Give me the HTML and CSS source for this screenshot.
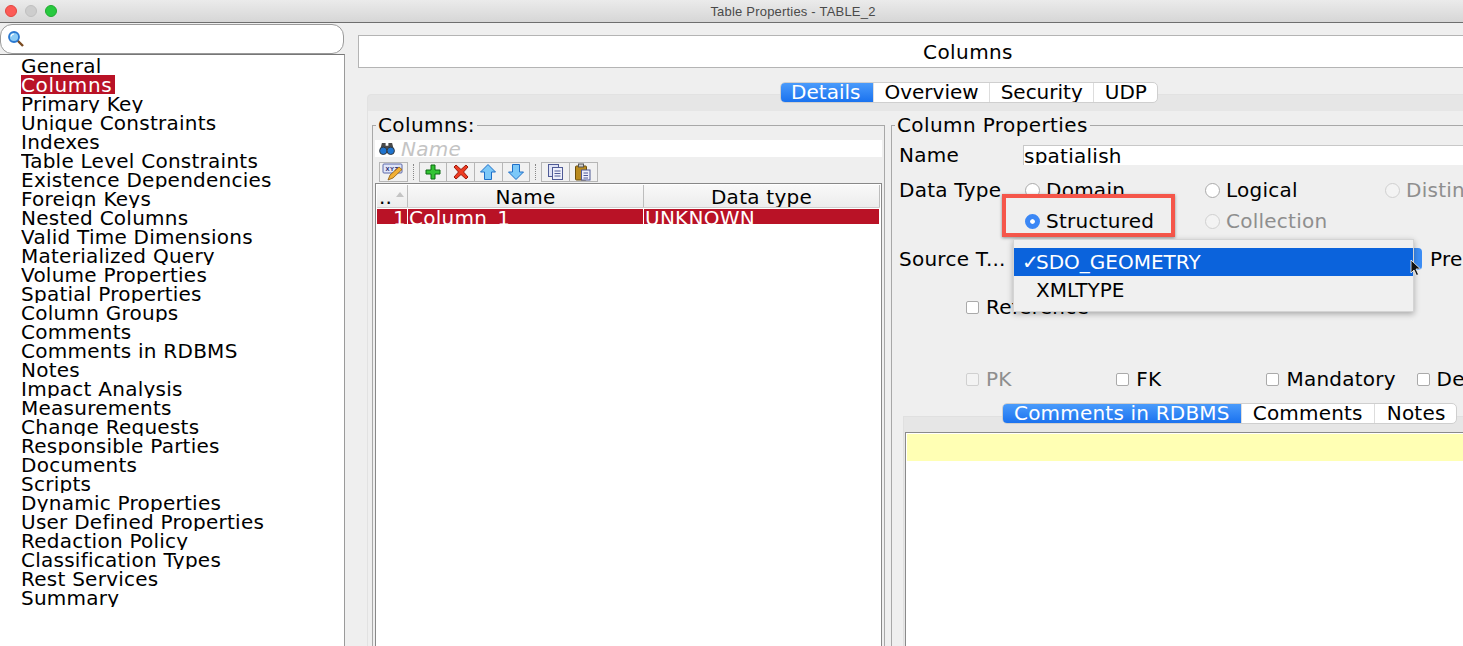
FILE: index.html
```html
<!DOCTYPE html>
<html lang="en">
<head>
<meta charset="utf-8">
<title>Table Properties - TABLE_2</title>
<link rel="stylesheet" href="styles.css">
</head>
<body>
<div class="window">
  <header class="titlebar">
    <span class="light red"></span><span class="light grey"></span><span class="light green"></span>
    <span class="wintitle">Table Properties - TABLE_2</span>
  </header>
  <div class="main">
    <aside class="side">
      <div class="search">
        <svg class="search-ic" width="18" height="18" viewBox="0 0 18 18"><line x1="10.5" y1="10.5" x2="16" y2="16" stroke="#7a4a20" stroke-width="2.4"/><circle cx="7" cy="7" r="5" fill="#8ccbf5" stroke="#2a78d0" stroke-width="1.8"/><path d="M4 6.5a3 3 0 0 1 3-2.500" fill="none" stroke="#fff" stroke-width="1.200"/></svg>
      </div>
      <ul class="nav">
        <li><span>General</span></li>
        <li><span class="sel">Columns</span></li>
        <li><span>Primary Key</span></li>
        <li><span>Unique Constraints</span></li>
        <li><span>Indexes</span></li>
        <li><span>Table Level Constraints</span></li>
        <li><span>Existence Dependencies</span></li>
        <li><span>Foreign Keys</span></li>
        <li><span>Nested Columns</span></li>
        <li><span>Valid Time Dimensions</span></li>
        <li><span>Materialized Query</span></li>
        <li><span>Volume Properties</span></li>
        <li><span>Spatial Properties</span></li>
        <li><span>Column Groups</span></li>
        <li><span>Comments</span></li>
        <li><span>Comments in RDBMS</span></li>
        <li><span>Notes</span></li>
        <li><span>Impact Analysis</span></li>
        <li><span>Measurements</span></li>
        <li><span>Change Requests</span></li>
        <li><span>Responsible Parties</span></li>
        <li><span>Documents</span></li>
        <li><span>Scripts</span></li>
        <li><span>Dynamic Properties</span></li>
        <li><span>User Defined Properties</span></li>
        <li><span>Redaction Policy</span></li>
        <li><span>Classification Types</span></li>
        <li><span>Rest Services</span></li>
        <li><span>Summary</span></li>
      </ul>
    </aside>
    <section class="content">
      <div class="pagehead">Columns</div>
      <div class="tabs maintabs">
        <span class="tab on">Details</span><span class="tab">Overview</span><span class="tab">Security</span><span class="tab">UDP</span>
      </div>
      <div class="tabpanel">
        <div class="panels">
          <fieldset class="group colgroup">
            <legend>Columns:</legend>
            <div class="filter">
              <svg width="16" height="13" viewBox="0 0 17 14"><path d="M3 1h4v3h3V1h4l2 8H9V7H8v2H1z" fill="#4a4a4a"/><circle cx="4.500" cy="9.500" r="4" fill="#1f74cf" stroke="#333"/><circle cx="12.500" cy="9.500" r="4" fill="#1f74cf" stroke="#333"/></svg>
              <span>Name</span>
            </div>
            <div class="toolbar">
              <span class="tb"><svg width="22" height="18" viewBox="0 0 22 18"><rect x="1" y="1" width="19" height="9" rx="1" fill="#dfe6fa" stroke="#5d68a8"/><text x="3.500" y="8" class="xy">XYZ</text><path d="M6 17l2-5 9-8 3 2.500-9 8.500z" fill="#f2b035" stroke="#8a5a10" stroke-width=".8"/></svg></span>
              <span class="sep"></span>
              <span class="tb"><svg width="18" height="18" viewBox="0 0 18 18"><path d="M7 2h4v5h5v4h-5v5H7v-5H2V7h5z" fill="#33c433" stroke="#0d6a12"/></svg></span><span class="tb"><svg width="18" height="18" viewBox="0 0 18 18"><path d="M2 4l2-2 5 4.500L14 2l2 2-4.500 5 4.500 5-2 2-5-4.500L4 16l-2-2 4.500-5z" fill="#ee3c22" stroke="#9c1a0c"/></svg></span><span class="tb"><svg width="18" height="18" viewBox="0 0 18 18"><path d="M9 1.500L16.500 9H12.500v7.500h-7V9H1.500z" fill="#7cc8f8" stroke="#1e6fc8"/></svg></span><span class="tb"><svg width="18" height="18" viewBox="0 0 18 18"><path d="M9 16.500L16.500 9H12.500V1.500h-7V9H1.500z" fill="#7cc8f8" stroke="#1e6fc8"/></svg></span>
              <span class="sep"></span>
              <span class="tb"><svg width="18" height="18" viewBox="0 0 18 18"><rect x="1.500" y="1.500" width="10" height="12" fill="#dfe3f5" stroke="#4f5a96"/><rect x="5.500" y="4.500" width="10" height="12" fill="#eef0fb" stroke="#4f5a96"/><path d="M7.500 8h6M7.500 10.500h6M7.500 13h6" stroke="#4f5a96"/></svg></span><span class="tb"><svg width="18" height="18" viewBox="0 0 18 18"><rect x="1.500" y="3" width="11" height="14" rx="1" fill="#b98a1e" stroke="#6b4e0d"/><rect x="4.500" y="1" width="5" height="3" fill="#d0d0d0" stroke="#555"/><rect x="7.500" y="7" width="8.500" height="10" fill="#eef0fb" stroke="#4f5a96"/><path d="M9.500 10h4.500M9.500 12.500h4.500M9.500 15h4.500" stroke="#4f5a96"/></svg></span>
            </div>
            <div class="table">
              <div class="thead">
                <div class="th th-n">..<i class="sort"></i></div>
                <div class="th">Name</div>
                <div class="th">Data type</div>
              </div>
              <div class="trow">
                <div class="td td-n">1</div>
                <div class="td">Column_1</div>
                <div class="td">UNKNOWN</div>
              </div>
            </div>
          </fieldset>
          <fieldset class="group propgroup">
            <legend>Column Properties</legend>
            <div class="row namerow">
              <label class="lbl">Name</label>
              <div class="input"><span>spatialish</span></div>
            </div>
            <div class="row typerow">
              <label class="lbl">Data Type</label>
              <div class="opt w180"><i class="radio"></i><span class="clip">Domain</span></div>
              <div class="opt w180"><i class="radio"></i><span>Logical</span></div>
              <div class="opt off"><i class="radio"></i><span>Distinct</span></div>
            </div>
            <div class="row structrow">
              <span class="lbl"></span>
              <div class="opt w180"><i class="radio on"></i><span>Structured</span></div>
              <div class="opt off"><i class="radio"></i><span>Collection</span></div>
            </div>
            <div class="row sourcerow">
              <label class="lbl">Source T...</label>
              <div class="combo"></div>
              <span class="after">Pre</span>
            </div>
            <div class="row refrow">
              <div class="opt chk"><i class="check"></i><span class="clip">Reference</span></div>
            </div>
            <div class="row flagrow">
              <div class="opt chk w150 off"><i class="check"></i><span>PK</span></div>
              <div class="opt chk w150"><i class="check"></i><span>FK</span></div>
              <div class="opt chk w150"><i class="check"></i><span>Mandatory</span></div>
              <div class="opt chk"><i class="check"></i><span>Deprecated</span></div>
            </div>
            <div class="tabs subtabs">
              <span class="tab on">Comments in RDBMS</span><span class="tab">Comments</span><span class="tab">Notes</span>
            </div>
            <div class="subpanel">
              <div class="editor"><div class="curline"></div></div>
            </div>
            <div class="highlight"></div>
            <div class="popup">
              <div class="item active"><span class="tick">✓</span>SDO_GEOMETRY</div>
              <div class="item"><span class="tick"></span>XMLTYPE</div>
            </div>
            <svg class="pointer" width="12" height="18" viewBox="0 0 12 18"><path d="M1 1v13l3-3 2.500 5.500 2-1L6 10h4.500z" fill="#111" stroke="#fff" stroke-width=".8"/></svg>
          </fieldset>
        </div>
      </div>
    </section>
  </div>
</div>
</body>
</html>
```
FILE: styles.css
```css
* { box-sizing: border-box; }
html, body { margin: 0; height: 100%; overflow: hidden; }
body { font-family: "DejaVu Sans", sans-serif; font-size: 20px; color: #000; background: #efefef; letter-spacing: .25px; }
.window { height: 646px; display: flex; flex-direction: column; overflow: hidden; }

.titlebar { height: 23px; flex: none; display: flex; align-items: center; padding-left: 5px; gap: 8px; position: relative;
  background: linear-gradient(#ebebeb, #d6d6d6); border-bottom: 1px solid #6e6e6e; }
.light { width: 12px; height: 12px; border-radius: 50%; }
.light.red { background: #fc5b57; border: 1px solid #e2463f; }
.light.grey { background: #cdcdcd; border: 1px solid #c0c0c0; }
.light.green { background: #28c93f; border: 1px solid #1faa2f; }
.wintitle { position: absolute; left: 123px; right: 0; text-align: center; font-family: "Liberation Sans", sans-serif; font-size: 13px; letter-spacing: .2px; color: #4a4a4a; }

.main { flex: 1; display: flex; min-height: 0; }
.side { width: 345px; flex: none; display: flex; flex-direction: column; }
.search { height: 30px; margin-top: 1px; width: 344px; background: #fff; border: 1px solid #9a9a9a; border-radius: 12px; padding: 5px 0 0 6px; flex: none; }
.search-ic { display: block; }
.nav { list-style: none; margin: 0; padding: 1px 0 0 21px; flex: 1; background: #fff; border-top: 1px solid #777; border-right: 1px solid #9a9a9a; }
.nav li { height: 19px; line-height: 21px; overflow: hidden; white-space: nowrap; }
.nav span { display: inline-block; height: 19px; padding-right: 2px; vertical-align: top; }
.nav .sel { background: #b91226; color: #fff; letter-spacing: .6px; padding-right: 3px; }

.content { width: 1222px; flex: none; margin-left: 13px; padding-top: 12px; }
.pagehead { height: 33px; width: 1220px; background: #fff; border: 1px solid #b4b4b4; text-align: center; line-height: 32px; letter-spacing: .4px; }
.tabs { display: flex; width: max-content; background: #fff; border: 1px solid #cfcfcf; border-radius: 5px; overflow: hidden; position: relative; z-index: 1; }
.tab { height: 19px; line-height: 19px; padding: 0 10.500px; border-left: 1px solid #ddd; white-space: nowrap; }
.tab:first-child { border-left: 0; }
.tab.on { color: #fff; background: linear-gradient(#4a9bfb, #1a72ef); }
.maintabs { margin: 14px auto -9px; letter-spacing: 0; }
.maintabs .on { padding-right: 12.500px; }
.tabpanel { margin-left: 9px; height: 600px; background: #e6e6e6; padding-top: 16px; border: 1px solid #e2e2e2; border-radius: 4px 4px 0 0; }
.panels { background: #efefef; height: 100%; display: flex; gap: 6px; padding: 0 0 0 4px; }

.group { margin: 0; padding: 0; border: 1px solid #a8a8a8; min-width: 0; position: relative; }
.group legend { padding: 0 2px; line-height: 24px; height: 24px; letter-spacing: .4px; }
.colgroup { width: 513px; flex: none; margin-top: 2px; padding: 0 2px; }
.colgroup legend { margin-left: 1px; }
.filter { height: 17px; background: #fff; display: flex; align-items: center; gap: 6px; padding-left: 4px; margin-top: 3px; color: #c4c4c4; font-style: italic; overflow: hidden; }
.toolbar { display: flex; align-items: center; height: 20px; margin-top: 5px; padding-left: 4px; }
.tb { width: 28.700px; height: 20px; flex: none; background: #f1f1f1; border: 1px solid #b6b6b6; display: flex; align-items: center; justify-content: center; margin-right: -1px; }
.sep { width: 1px; height: 16px; margin: 0 5px 0 6px; border-left: 1px dotted #888; flex: none; }
.xy { font-size: 6px; font-weight: 700; fill: #20206a; font-family: "Liberation Sans", sans-serif; letter-spacing: .5px; }
.table { margin-top: 1px; height: 480px; background: #fff; border: 1px solid #888; padding: 1px; }
.thead { display: grid; grid-template-columns: 31px 236px 236px; height: 23px; background: linear-gradient(#f9f9f9, #ececec); border-bottom: 1px solid #cfcfcf; }
.th { text-align: center; line-height: 24px; border-right: 1px solid #bdbdbd; position: relative; overflow: hidden; }
.th-n { text-align: left; padding-left: 2px; }
.sort { position: absolute; right: 3px; top: 7px; border: 4px solid transparent; border-bottom: 5px solid #c4c4c4; border-top: 0; }
.trow { display: grid; grid-template-columns: 31px 236px 236px; height: 15px; margin-top: 1px; background: #b91226; color: #fff; line-height: 18px; overflow: hidden; }
.td { border-right: 1px solid #fff; overflow: hidden; white-space: nowrap; padding-left: 1px; }
.td-n { text-align: right; padding-right: 1px; }

.propgroup { width: 700px; flex: none; margin-top: 2px; padding: 0 0 0 7px; }
.propgroup legend { margin-left: -4px; }
.row { display: flex; align-items: center; white-space: nowrap; }
.lbl { width: 126px; flex: none; }
.namerow { height: 22px; margin-top: 7px; }
.input { width: 500px; height: 20px; margin-left: -2px; background: #fff; border: 1px solid #c8c8c8; border-bottom: 0; line-height: 20px; overflow: hidden; }
.input span { display: block; height: 18px; overflow: hidden; }
.typerow { height: 22px; margin-top: 13px; }
.structrow { height: 22px; margin-top: 9px; }
.sourcerow { height: 22px; margin-top: 16px; }
.combo { width: 409px; height: 22px; margin-left: -12px; background: #3c8df5; border-radius: 4px; }
.after { margin-left: 8px; }
.refrow { height: 20px; margin-top: 27px; padding-left: 67px; }
.flagrow { height: 20px; margin-top: 52px; padding-left: 67px; }
.opt { display: flex; align-items: center; gap: 6px; }
.opt.chk { gap: 7px; }
.w180 { width: 180px; }
.w150 { width: 150.200px; }
.opt.off { color: #8e8e8e; }
.clip { height: 20px; line-height: 20px; }
.radio { width: 15px; height: 15px; border-radius: 50%; background: #fff; border: 1px solid #aaa; flex: none; }
.radio.on { background: #3b87f5; border: 5px solid #3b87f5; box-shadow: inset 0 0 0 3px #fff; }
.off .radio, .off .check { background: #f3f3f3; border-color: #d0d0d0; }
.check { width: 13px; height: 13px; border-radius: 2px; background: #fff; border: 1px solid #aaa; flex: none; }
.subtabs { margin: 14px 0 -8px 103px; letter-spacing: .2px; }
.subtabs .tab { padding: 0 11px; }
.subtabs .tab:last-child { padding-left: 12px; padding-right: 10px; }
.subpanel { margin-left: 4px; height: 300px; background: #e6e6e6; border: 1px solid #e0e0e0; padding-top: 15px; padding-left: 1px; }
.editor { height: 100%; background: #fff; border: 1px solid #8a8a8a; padding: 1px; }
.curline { height: 27px; background: #ffffb4; }

.highlight { position: absolute; left: 110px; top: 57px; width: 173px; height: 43px; border: 4px solid #f5564a; box-shadow: 0 1px 3px rgba(0,0,0,.4); z-index: 2; }
.popup { position: absolute; left: 121px; top: 102px; width: 401px; height: 73px; background: #f0f0f0; border: 1px solid #d4d4d4; box-shadow: 0 2px 6px rgba(0,0,0,.3); padding-top: 8px; z-index: 3; letter-spacing: 0; }
.item { height: 28px; line-height: 28px; display: flex; padding-left: 8px; }
.item.active { background: #0b63dc; color: #fff; }
.tick { width: 14px; font-weight: 700; }
.pointer { position: absolute; left: 518px; top: 122px; z-index: 4; }
```
